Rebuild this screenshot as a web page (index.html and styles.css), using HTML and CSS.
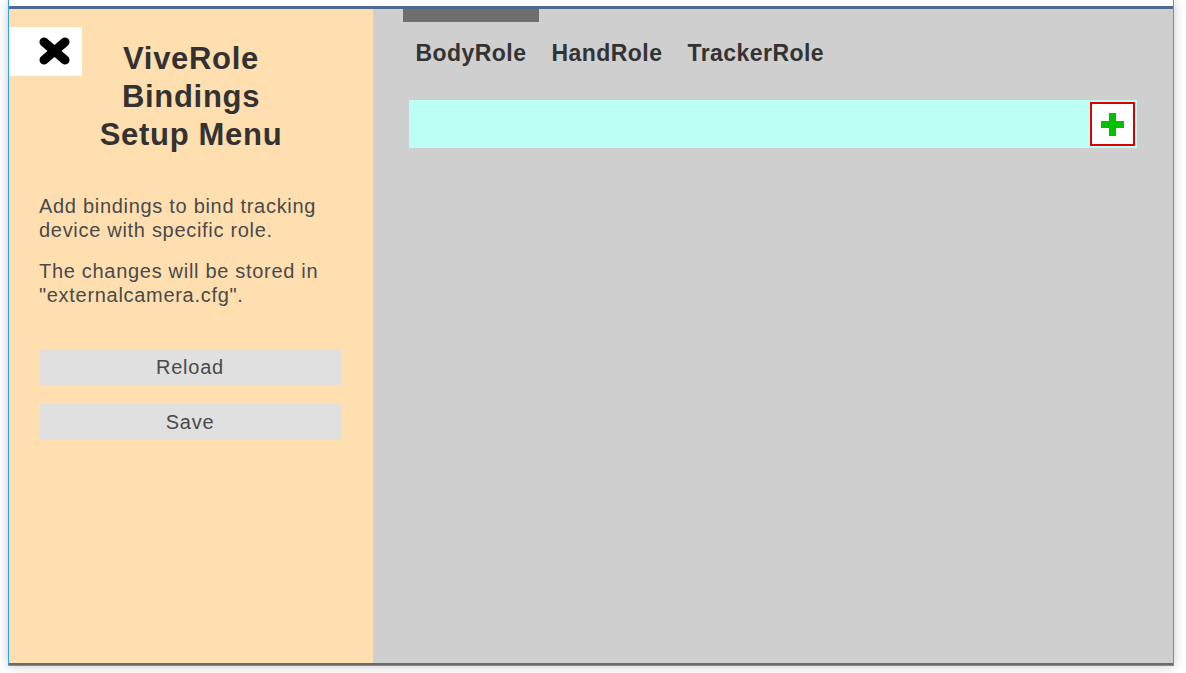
FILE: index.html
```html
<!DOCTYPE html>
<html>
<head>
<meta charset="utf-8">
<link rel="stylesheet" href="styles.css">
</head>
<body>
<div class="window">
  <div class="titlebar"></div>
  <div class="content">
    <aside class="sidebar">
      <button class="close" aria-label="Close">
        <svg width="73" height="49" viewBox="0 0 73 49">
          <line x1="35" y1="15" x2="56" y2="33" stroke="#000" stroke-width="9" stroke-linecap="round"/>
          <line x1="56" y1="15" x2="35" y2="33" stroke="#000" stroke-width="9" stroke-linecap="round"/>
        </svg>
      </button>
      <h1 class="title">ViveRole<br>Bindings<br>Setup Menu</h1>
      <p class="desc">Add bindings to bind tracking device with specific role.</p>
      <p class="desc second">The changes will be stored in "externalcamera.cfg".</p>
      <div class="actions">
        <button class="btn">Reload</button>
        <button class="btn">Save</button>
      </div>
    </aside>
    <main class="main">
      <nav class="tabs">
        <div class="tab active">BodyRole</div>
        <div class="tab">HandRole</div>
        <div class="tab">TrackerRole</div>
      </nav>
      <div class="row">
        <button class="add" aria-label="Add">
          <svg width="23" height="23" viewBox="0 0 23 23">
            <rect x="8" y="0" width="7" height="23" fill="#00c000"/>
            <rect x="0" y="8" width="23" height="7" fill="#00c000"/>
          </svg>
        </button>
      </div>
    </main>
  </div>
</div>
</body>
</html>
```

FILE: styles.css
```css
html, body {
  margin: 0;
  padding: 0;
  background: #ffffff;
  width: 1186px;
  height: 673px;
  overflow: hidden;
}

.window {
  margin-left: 8px;
  width: 1164px;
  border-left: 1px solid #2ea3ef;
  border-right: 1px solid #2ea3ef;
  border-bottom: 1px solid #2ea3ef;
  background: #ffffff;
  box-shadow: 0 0 10px rgba(0, 0, 0, 0.22);
  font-family: "Liberation Sans", Arial, sans-serif;
}

.titlebar {
  height: 6px;
  border-bottom: 3px solid #4f6a90;
  background: #ffffff;
}

.content {
  display: flex;
  height: 654px;
  border-bottom: 2px solid #6b6b6b;
}

.sidebar {
  position: relative;
  width: 364px;
  flex: none;
  background: #ffdfb0;
  box-sizing: border-box;
  padding: 31px 32px 0 30px;
  display: flex;
  flex-direction: column;
}

.close {
  position: absolute;
  left: 0;
  top: 18px;
  width: 73px;
  height: 49px;
  padding: 0;
  border: none;
  background: #ffffff;
  display: block;
}

.close svg {
  display: block;
}

.title {
  margin: 0;
  text-align: center;
  font-size: 31px;
  line-height: 38px;
  font-weight: bold;
  letter-spacing: 0.7px;
  color: #323232;
  margin-left: -30px;
  margin-right: -32px;
}

.desc {
  margin: 40px 0 0 0;
  font-size: 20px;
  line-height: 24px;
  letter-spacing: 0.7px;
  color: #4a4a4a;
}

.desc.second {
  margin-top: 17px;
}

.actions {
  margin-top: 42px;
  display: flex;
  flex-direction: column;
  gap: 19px;
}

.btn {
  width: 302px;
  height: 36px;
  border: none;
  padding: 0;
  background: #e0e0e0;
  font-family: "Liberation Sans", Arial, sans-serif;
  font-size: 20px;
  letter-spacing: 0.75px;
  color: #4a4a4a;
}

.main {
  flex: 1;
  background: #cfcfcf;
  padding: 0 36px;
  display: flex;
  flex-direction: column;
}

.tabs {
  display: flex;
  margin-left: -6px;
}

.tab {
  padding: 18px 12.5px 0 12.5px;
  border-top: 13px solid transparent;
  font-size: 23px;
  line-height: 26px;
  font-weight: bold;
  letter-spacing: 0.45px;
  color: #333333;
  white-space: nowrap;
}

.tab.active {
  border-top-color: #6e6e6e;
}

.row {
  margin-top: 34px;
  height: 48px;
  background: #bbfff5;
  display: flex;
  justify-content: flex-end;
  align-items: center;
  padding-right: 2px;
}

.add {
  width: 45px;
  height: 44px;
  box-sizing: border-box;
  border: 2px solid #dd0000;
  background: #ffffff;
  padding: 0;
  display: flex;
  align-items: center;
  justify-content: center;
}

.add svg {
  display: block;
}
```
